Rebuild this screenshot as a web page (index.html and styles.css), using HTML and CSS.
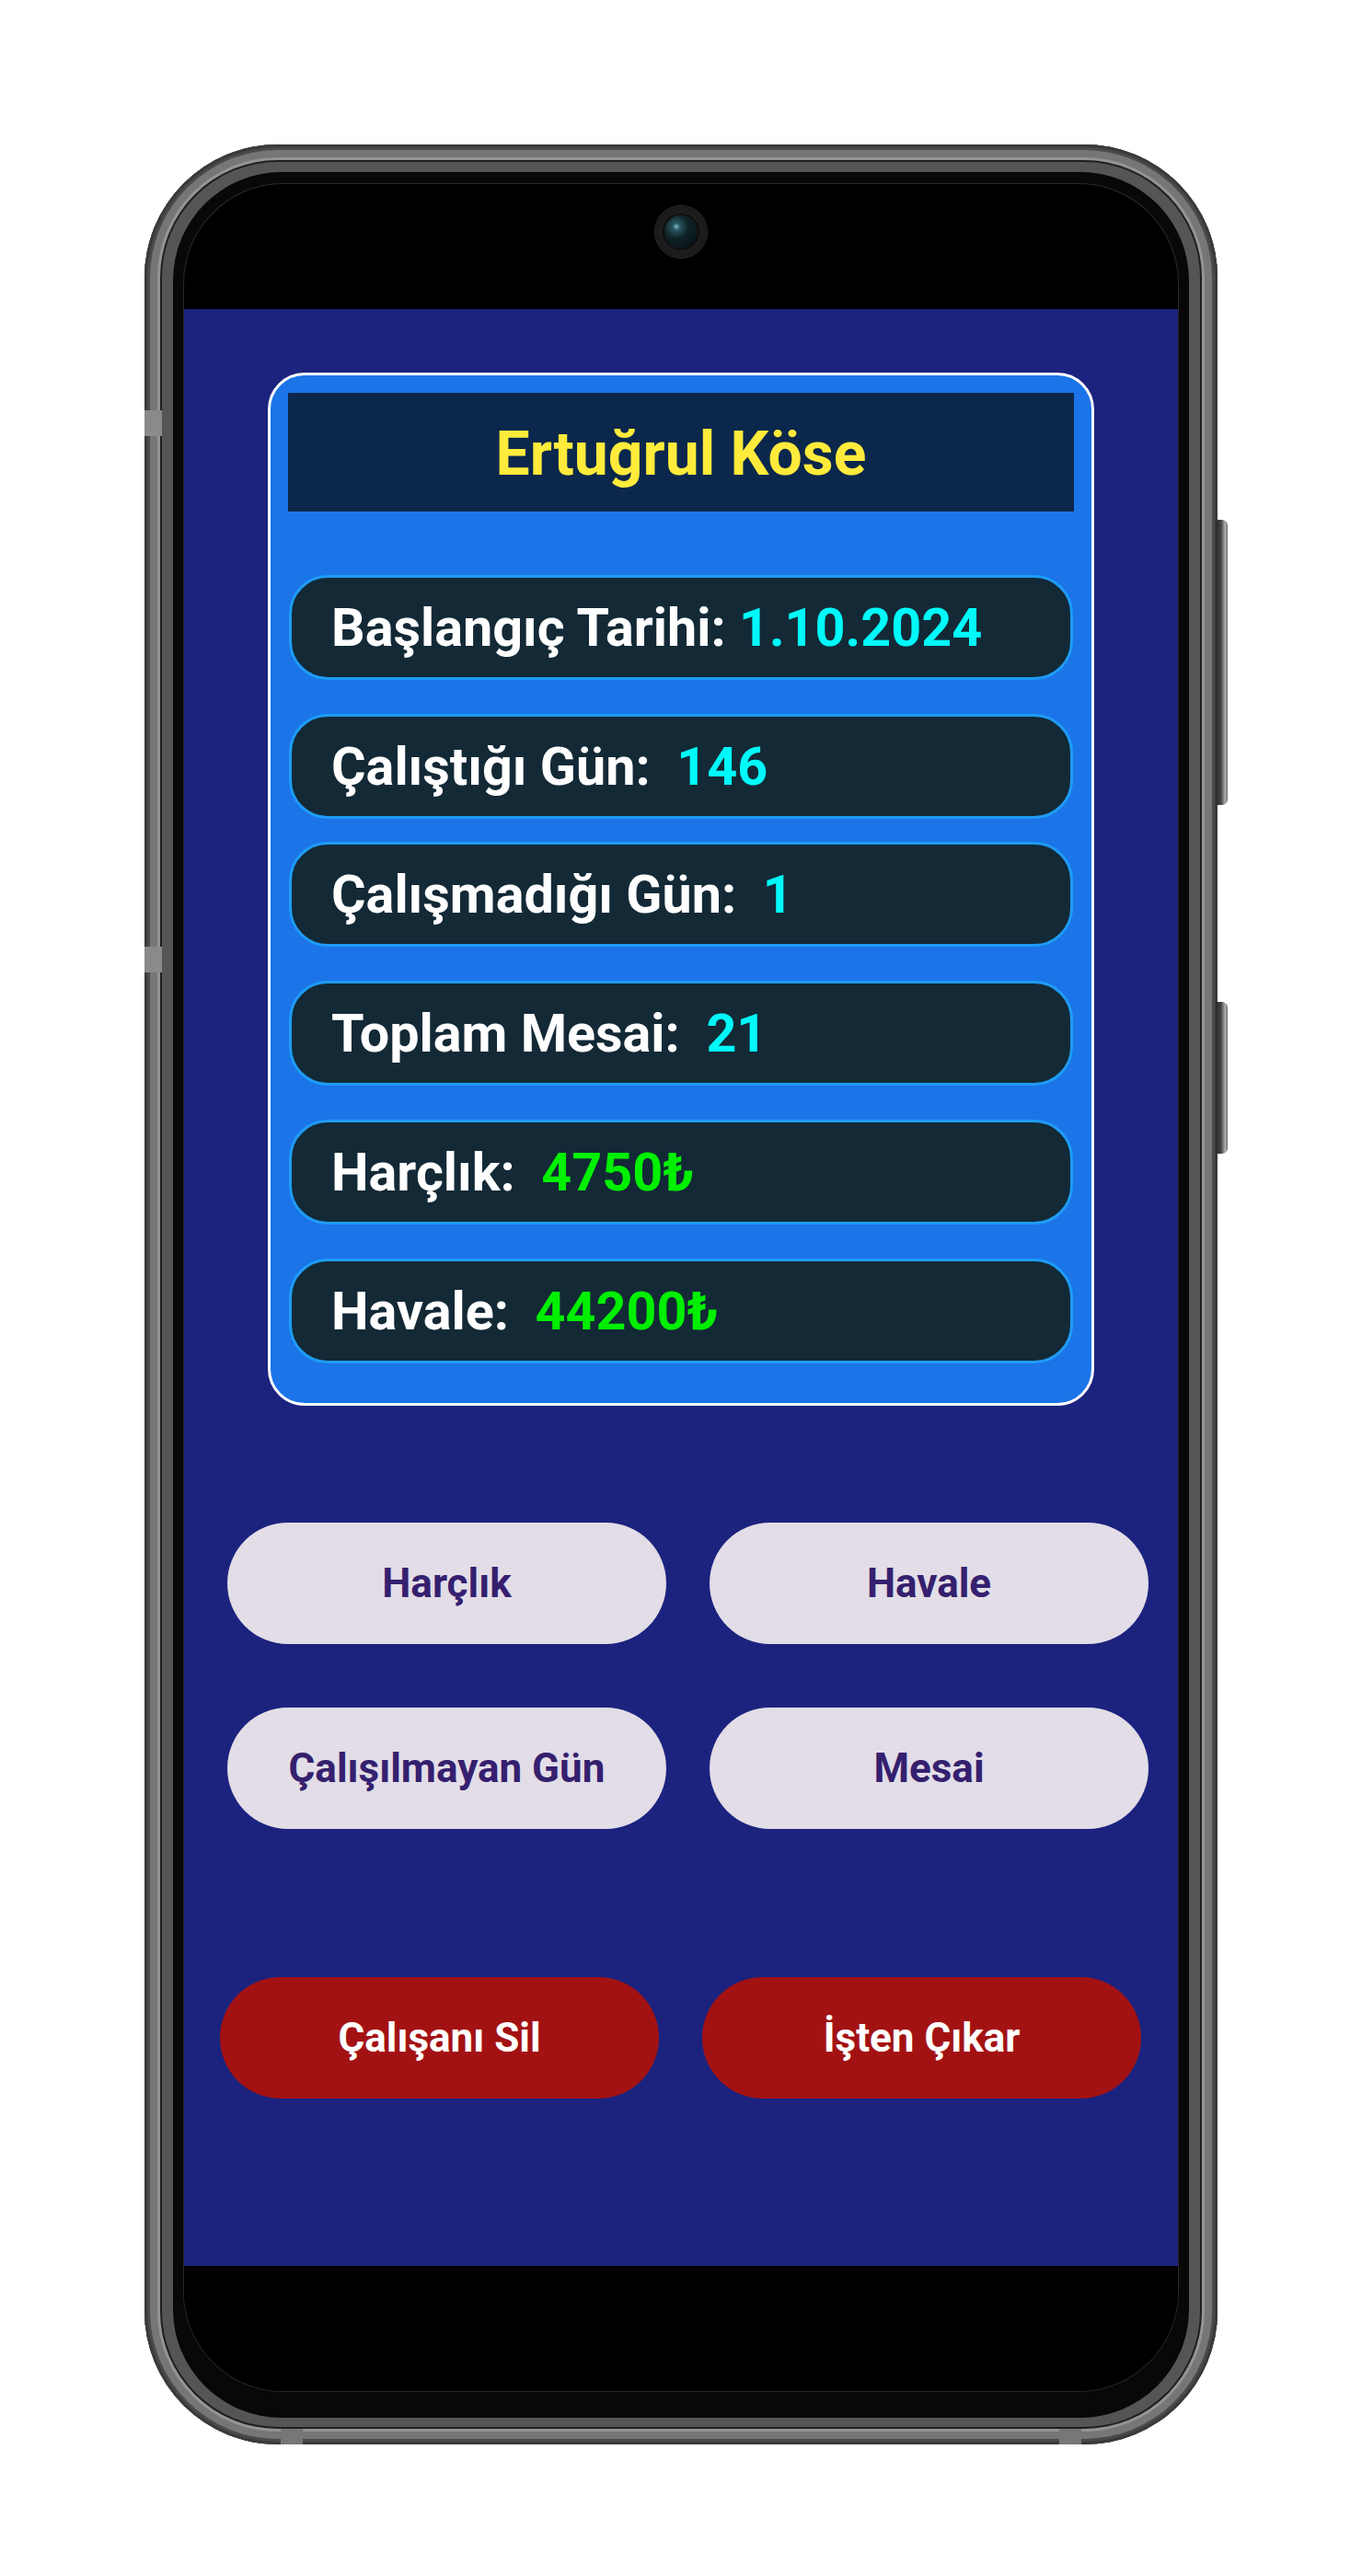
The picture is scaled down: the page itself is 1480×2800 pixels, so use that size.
FILE: index.html
```html
<!DOCTYPE html>
<html lang="tr">
<head>
<meta charset="utf-8">
<title>Çalışan Detayı</title>
<link rel="stylesheet" href="styles.css">
</head>
<body>
<div class="page">
  <div class="phone">
    <span class="side-btn side-btn-power"></span>
    <span class="side-btn side-btn-vol"></span>
    <span class="antenna antenna-l1"></span>
    <span class="antenna antenna-l2"></span>
    <span class="antenna antenna-b1"></span>
    <span class="antenna antenna-b2"></span>
    <div class="bezel">
      <div class="screen">
        <div class="topbar">
          <div class="camera"><div class="lens"></div></div>
        </div>
        <div class="app">
          <div class="card">
            <div class="card-header">Ertuğrul Köse</div>
            <div class="rows">
              <div class="row"><span class="label">Başlangıç Tarihi: </span><span class="val cyan">1.10.2024</span></div>
              <div class="row"><span class="label">Çalıştığı Gün:  </span><span class="val cyan">146</span></div>
              <div class="row tight"><span class="label">Çalışmadığı Gün:  </span><span class="val cyan">1</span></div>
              <div class="row"><span class="label">Toplam Mesai:  </span><span class="val cyan">21</span></div>
              <div class="row"><span class="label">Harçlık:  </span><span class="val green">4750₺</span></div>
              <div class="row"><span class="label">Havale:  </span><span class="val green">44200₺</span></div>
            </div>
          </div>
          <div class="actions">
            <button class="btn btn-light">Harçlık</button>
            <button class="btn btn-light">Havale</button>
            <button class="btn btn-light">Çalışılmayan Gün</button>
            <button class="btn btn-light">Mesai</button>
          </div>
          <div class="danger">
            <button class="btn btn-red">Çalışanı Sil</button>
            <button class="btn btn-red">İşten Çıkar</button>
          </div>
        </div>
        <div class="bottombar"></div>
      </div>
    </div>
  </div>
</div>
</body>
</html>
```
FILE: styles.css
```css
* { box-sizing: border-box; }
html, body { margin: 0; padding: 0; background: #ffffff; }
body { font-family: Roboto, "Noto Sans", "DejaVu Sans", sans-serif; }

.page {
  width: 1480px;
  height: 2800px;
  padding-top: 157px;
}

.phone {
  position: relative;
  width: 1166px;
  height: 2500px;
  margin: 0 0 0 157px;
  padding: 30px 31px 29px 31px;
  border-radius: 145px;
  background: #555555;
  box-shadow:
    inset 0 0 0 3px #3a3a3a,
    inset 0 0 0 6px #4a4a4a,
    inset 0 0 0 14px #767676,
    inset 0 0 0 17px #949494,
    inset 0 0 0 19px #1f1f1f;
}

.side-btn {
  position: absolute;
  right: -11px;
  width: 13px;
  border-radius: 0 6px 6px 0;
  background: linear-gradient(90deg, #2a2a2a 0%, #444 45%, #b0b0b0 80%, #666 100%);
}
.side-btn-power { top: 408px; height: 310px; }
.side-btn-vol { top: 932px; height: 165px; }

.antenna {
  position: absolute;
  background: #8a8a8a;
}
.antenna-l1 { left: 0; top: 289px; width: 19px; height: 28px; }
.antenna-l2 { left: 0; top: 872px; width: 19px; height: 28px; }
.antenna-b1 { left: 148px; bottom: 0; width: 24px; height: 17px; background: #777; }
.antenna-b2 { right: 148px; bottom: 0; width: 24px; height: 17px; background: #777; }

.bezel {
  width: 100%;
  height: 100%;
  padding: 13px 12px 29px 12px;
  border-radius: 118px;
  background: #080808;
}

.screen {
  width: 100%;
  height: 100%;
  border-radius: 108px;
  background: #000000;
  overflow: hidden;
  display: flex;
  flex-direction: column;
  box-shadow: 0 0 0 1px #2a2a2a;
}

.topbar {
  height: 136px;
  flex: none;
  display: flex;
  justify-content: center;
  padding-top: 24px;
}

.camera {
  width: 56px;
  height: 56px;
  border-radius: 50%;
  background: radial-gradient(circle at 50% 50%, #222 0%, #1c1c1c 60%, #151515 100%);
  box-shadow: 0 0 0 1px #2c2c2c;
  display: flex;
  align-items: center;
  justify-content: center;
}

.lens {
  width: 36px;
  height: 36px;
  border-radius: 50%;
  background: radial-gradient(circle at 36% 34%, #7fb8c6 0, #2a5660 12%, #0e2226 40%, #070d0f 100%);
  box-shadow: 0 0 0 2px #0f0f0f;
}

.app {
  height: 2127px;
  flex: none;
  background: #1b237e;
  padding-top: 69px;
}

.bottombar {
  flex: 1;
  background: #000;
}

.card {
  width: 898px;
  margin: 0 auto;
  border: 3px solid #ffffff;
  border-radius: 40px;
  background: #1b74e8;
  padding: 19px 19px 43px 19px;
}

.card-header {
  height: 129px;
  background: #0b274b;
  color: #ffeb3b;
  font-size: 66px;
  font-weight: 700;
  display: flex;
  align-items: center;
  justify-content: center;
  padding-top: 3px;
}

.rows {
  display: flex;
  flex-direction: column;
  margin-top: 69px;
  padding: 0 1px;
}

.row {
  height: 114px;
  border: 3px solid #1f9cf5;
  border-radius: 42px;
  background: #132936;
  display: flex;
  align-items: center;
  padding-left: 43px;
  font-size: 57.5px;
  font-weight: 700;
  white-space: pre;
}
.row + .row { margin-top: 37px; }
.row.tight { margin-top: 25px; }

.label { color: #ffffff; }
.cyan { color: #00fafa; }
.green { color: #00f000; }

.actions {
  margin-top: 127px;
  padding-left: 47px;
  display: grid;
  grid-template-columns: 477px 477px;
  column-gap: 47px;
  row-gap: 69px;
}

.btn {
  height: 132px;
  border: none;
  border-radius: 66px;
  font-family: Roboto, "Noto Sans", "DejaVu Sans", sans-serif;
  font-size: 44px;
  font-weight: 700;
  display: flex;
  align-items: center;
  justify-content: center;
  padding: 0;
}

.btn-light {
  background: #e2dde7;
  color: #35206f;
}

.danger {
  margin-top: 161px;
  padding-left: 39px;
  display: flex;
  gap: 47px;
}

.btn-red {
  width: 477px;
  background: #a31213;
  color: #ffffff;
}
```
